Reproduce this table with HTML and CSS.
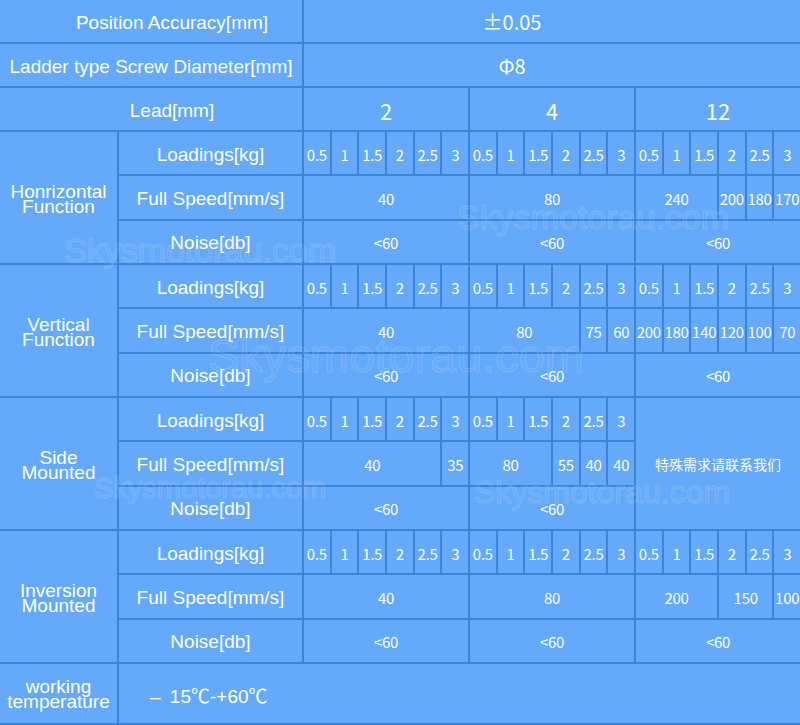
FILE: index.html
```html
<!DOCTYPE html>
<html>
<head>
<meta charset="utf-8">
<link rel="stylesheet" href="styles.css">
</head>
<body>
<div class="page">
  <div class="table">
    <div class="c lbl wide shift">Position Accuracy[mm]</div>
    <div class="c big full">±0.05</div>

    <div class="c lbl wide">Ladder type Screw Diameter[mm]</div>
    <div class="c big full">Φ8</div>

    <div class="c lbl wide shift">Lead[mm]</div>
    <div class="c lead s6">2</div>
    <div class="c lead s6">4</div>
    <div class="c lead s6">12</div>

    <!-- Horizontal -->
    <div class="c grp">Honrizontal<br>Function</div>
    <div class="c lbl">Loadings[kg]</div>
    <div class="c n">0.5</div><div class="c n">1</div><div class="c n">1.5</div><div class="c n">2</div><div class="c n">2.5</div><div class="c n">3</div>
    <div class="c n">0.5</div><div class="c n">1</div><div class="c n">1.5</div><div class="c n">2</div><div class="c n">2.5</div><div class="c n">3</div>
    <div class="c n">0.5</div><div class="c n">1</div><div class="c n">1.5</div><div class="c n">2</div><div class="c n">2.5</div><div class="c n">3</div>
    <div class="c lbl">Full Speed[mm/s]</div>
    <div class="c n s6">40</div>
    <div class="c n s6">80</div>
    <div class="c n s3">240</div><div class="c n">200</div><div class="c n">180</div><div class="c n">170</div>
    <div class="c lbl">Noise[db]</div>
    <div class="c n s6">&lt;60</div><div class="c n s6">&lt;60</div><div class="c n s6">&lt;60</div>

    <!-- Vertical -->
    <div class="c grp">Vertical<br>Function</div>
    <div class="c lbl">Loadings[kg]</div>
    <div class="c n">0.5</div><div class="c n">1</div><div class="c n">1.5</div><div class="c n">2</div><div class="c n">2.5</div><div class="c n">3</div>
    <div class="c n">0.5</div><div class="c n">1</div><div class="c n">1.5</div><div class="c n">2</div><div class="c n">2.5</div><div class="c n">3</div>
    <div class="c n">0.5</div><div class="c n">1</div><div class="c n">1.5</div><div class="c n">2</div><div class="c n">2.5</div><div class="c n">3</div>
    <div class="c lbl">Full Speed[mm/s]</div>
    <div class="c n s6">40</div>
    <div class="c n s4">80</div><div class="c n">75</div><div class="c n">60</div>
    <div class="c n">200</div><div class="c n">180</div><div class="c n">140</div><div class="c n">120</div><div class="c n">100</div><div class="c n">70</div>
    <div class="c lbl">Noise[db]</div>
    <div class="c n s6">&lt;60</div><div class="c n s6">&lt;60</div><div class="c n s6">&lt;60</div>

    <!-- Side -->
    <div class="c grp">Side<br>Mounted</div>
    <div class="c lbl">Loadings[kg]</div>
    <div class="c n">0.5</div><div class="c n">1</div><div class="c n">1.5</div><div class="c n">2</div><div class="c n">2.5</div><div class="c n">3</div>
    <div class="c n">0.5</div><div class="c n">1</div><div class="c n">1.5</div><div class="c n">2</div><div class="c n">2.5</div><div class="c n">3</div>
    <div class="c cn">特殊需求请联系我们</div>
    <div class="c lbl">Full Speed[mm/s]</div>
    <div class="c n s5">40</div><div class="c n">35</div>
    <div class="c n s3">80</div><div class="c n">55</div><div class="c n">40</div><div class="c n">40</div>
    <div class="c lbl">Noise[db]</div>
    <div class="c n s6">&lt;60</div><div class="c n s6">&lt;60</div>

    <!-- Inversion -->
    <div class="c grp">Inversion<br>Mounted</div>
    <div class="c lbl">Loadings[kg]</div>
    <div class="c n">0.5</div><div class="c n">1</div><div class="c n">1.5</div><div class="c n">2</div><div class="c n">2.5</div><div class="c n">3</div>
    <div class="c n">0.5</div><div class="c n">1</div><div class="c n">1.5</div><div class="c n">2</div><div class="c n">2.5</div><div class="c n">3</div>
    <div class="c n">0.5</div><div class="c n">1</div><div class="c n">1.5</div><div class="c n">2</div><div class="c n">2.5</div><div class="c n">3</div>
    <div class="c lbl">Full Speed[mm/s]</div>
    <div class="c n s6">40</div>
    <div class="c n s6">80</div>
    <div class="c n s3">200</div><div class="c n s2">150</div><div class="c n">100</div>
    <div class="c lbl">Noise[db]</div>
    <div class="c n s6">&lt;60</div><div class="c n s6">&lt;60</div><div class="c n s6">&lt;60</div>

    <!-- Temperature -->
    <div class="c grp-single">working<br>temperature</div>
    <div class="c temp">– 15℃-+60℃</div>
  </div>

  <div class="wm wm1">Skysmotorau.com</div>
  <div class="wm wm2">Skysmotorau.com</div>
  <div class="wm wm3">Skysmotorau.com</div>
  <div class="wm wm4">Skysmotorau.com</div>
  <div class="wm wm5">Skysmotorau.com</div>
</div>
</body>
</html>
```

FILE: styles.css
```css
html, body {
  margin: 0;
  padding: 0;
  background: #3c84d9;
}

.page {
  position: relative;
  width: 800px;
  height: 725px;
  overflow: hidden;
}

.table {
  display: grid;
  width: 800px;
  height: 725px;
  box-sizing: border-box;
  padding-bottom: 2px;
  background: #3c84d9;
  gap: 2px;
  grid-template-columns: 117px 183px repeat(18, 1fr);
  grid-template-rows: 42px 42px 42px repeat(12, 1fr) 59px;
}

.c {
  background: #64a9fa;
  color: #ffffff;
  display: flex;
  align-items: center;
  justify-content: center;
  text-align: center;
  white-space: nowrap;
  overflow: visible;
  box-sizing: border-box;
}

.lbl {
  font-family: "Liberation Sans", Arial, sans-serif;
  font-size: 19px;
  padding-top: 3px;
}

.wide {
  grid-column: 1 / 3;
}

.shift {
  padding-left: 42px;
}

.full {
  grid-column: 3 / -1;
  padding-right: 80px;
}

.big {
  font-family: "Noto Sans CJK SC", "Noto Sans", sans-serif;
  font-size: 20px;
  padding-top: 1px;
}

.lead {
  font-family: "Noto Sans CJK SC", "Noto Sans", sans-serif;
  font-size: 22px;
  padding-top: 2px;
}

.n {
  font-family: "Noto Sans CJK SC", "Noto Sans", sans-serif;
  font-size: 15px;
  letter-spacing: -0.3px;
  padding-top: 2px;
}

.s2 { grid-column: span 2; }
.s3 { grid-column: span 3; }
.s4 { grid-column: span 4; }
.s5 { grid-column: span 5; }
.s6 { grid-column: span 6; }

.grp {
  grid-row: span 3;
  font-family: "Liberation Sans", Arial, sans-serif;
  font-size: 19px;
  line-height: 15.5px;
  padding-top: 4px;
}

.grp-single {
  font-family: "Liberation Sans", Arial, sans-serif;
  font-size: 19px;
  line-height: 15.5px;
  padding-top: 2px;
}

.cn {
  grid-column: span 6;
  grid-row: span 3;
  font-family: "Noto Sans CJK SC", sans-serif;
  font-size: 14px;
  padding-top: 2px;
}

.temp {
  grid-column: 2 / -1;
  justify-content: flex-start;
  padding-left: 31px;
  padding-top: 3px;
  font-family: "Liberation Sans", "Noto Sans CJK SC", sans-serif;
  font-size: 19px;
  word-spacing: 4px;
}

.wm {
  position: absolute;
  pointer-events: none;
  font-family: "Liberation Sans", Arial, sans-serif;
  color: rgba(255, 255, 255, 0.04);
  -webkit-text-stroke: 1px rgba(255, 255, 255, 0.18);
  white-space: nowrap;
  line-height: 1;
}

.wm1 { left: 64px; top: 233px; font-size: 34px; }
.wm2 { left: 457px; top: 200px; font-size: 34px; }
.wm3 { left: 208px; top: 332px; font-size: 47px; }
.wm4 { left: 94px; top: 474px; font-size: 29px; }
.wm5 { left: 474px; top: 476px; font-size: 32px; }
```
